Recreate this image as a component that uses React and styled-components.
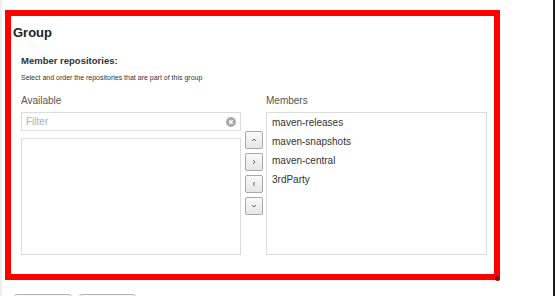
import React from "react";
import styled, { createGlobalStyle } from "styled-components";

const MEMBERS = ["maven-releases", "maven-snapshots", "maven-central", "3rdParty"];

const GlobalStyle = createGlobalStyle`
  html, body {
    margin: 0;
    padding: 0;
    background: #fff;
    font-family: "Liberation Sans", Arial, sans-serif;
    overflow: hidden;
  }
`;

const Page = styled.div`
  position: relative;
  display: flex;
  width: 555px;
  height: 296px;
  box-sizing: border-box;
  border-left: 2px solid #eeeeee;
  border-right: 2px solid #1a1a1a;
  overflow: hidden;
`;

const Content = styled.div`
  flex: 1;
  padding: 25px 0 0 11px;
`;

const Title = styled.h2`
  margin: 0;
  font-size: 13px;
  line-height: 16px;
  font-weight: bold;
  color: #222;
`;

const Section = styled.div`
  padding-left: 8px;
  margin-top: 14px;
`;

const SectionTitle = styled.div`
  font-size: 9.5px;
  line-height: 12px;
  font-weight: bold;
  color: #333;
`;

const Hint = styled.div`
  margin-top: 6px;
  font-size: 7px;
  line-height: 9px;
  color: #333;
`;

const Columns = styled.div`
  display: flex;
  margin-top: 13px;
`;

const Column = styled.div`
  display: flex;
  flex-direction: column;
  width: ${(p) => p.$width}px;
`;

const Label = styled.div`
  font-size: 10px;
  line-height: 12px;
  color: #555;
  margin-bottom: 5px;
`;

const FilterBox = styled.div`
  position: relative;
  display: flex;
  align-items: center;
  height: 19px;
  box-sizing: border-box;
  border: 1px solid #dcdcdc;
  padding: 0 4px;
`;

const FilterInput = styled.input`
  flex: 1;
  border: none;
  outline: none;
  padding: 0;
  font: 10px "Liberation Sans", Arial, sans-serif;
  color: #333;
  background: transparent;
  &::placeholder {
    color: #b0b0b0;
  }
`;

const ClearIcon = styled.svg`
  width: 10px;
  height: 10px;
  flex: none;
`;

const ListBox = styled.div`
  box-sizing: border-box;
  border: 1px solid #dcdcdc;
  height: ${(p) => p.$height}px;
  margin-top: ${(p) => p.$gap || 0}px;
  padding: 0 5px;
`;

const Item = styled.div`
  font-size: 10px;
  line-height: 19px;
  color: #333;
`;

const Mover = styled.div`
  display: flex;
  flex-direction: column;
  gap: 4px;
  width: 25px;
  padding: 36px 0 0 4px;
  box-sizing: border-box;
`;

const MoveButton = styled.button`
  display: flex;
  align-items: center;
  justify-content: center;
  width: 18px;
  height: 18px;
  padding: 0;
  box-sizing: border-box;
  border: 1px solid #a8a8a8;
  border-radius: 2px;
  background: linear-gradient(#fafafa, #e6e6e6);
`;

const Footer = styled.div`
  display: flex;
  gap: 7px;
  margin: 39px 0 0 1px;
`;

const FooterButton = styled.button`
  width: ${(p) => p.$width}px;
  height: 24px;
  border: 1px solid #b5b5b5;
  border-radius: 3px;
  background: linear-gradient(#fafafa, #e8e8e8);
`;

const Highlight = styled.div`
  position: absolute;
  left: 3px;
  top: 10px;
  width: 495px;
  height: 270px;
  box-sizing: border-box;
  border: 6px solid #ff0000;
  pointer-events: none;
`;

const Handle = styled.div`
  position: absolute;
  left: 493px;
  top: 276px;
  width: 5px;
  height: 5px;
  border-radius: 50%;
  background: #8a1010;
`;

const Chevron = ({ points }) => (
  <svg width="8" height="8" viewBox="0 0 8 8">
    <polyline points={points} fill="none" stroke="#666" strokeWidth="1" />
  </svg>
);

const CHEVRONS = ["2,5 4,3 6,5", "3,2 5,4 3,6", "5,2 3,4 5,6", "2,3 4,5 6,3"];

const App = () => (
  <Page>
    <GlobalStyle />
    <Content>
      <Title>Group</Title>
      <Section>
        <SectionTitle>Member repositories:</SectionTitle>
        <Hint>Select and order the repositories that are part of this group</Hint>
        <Columns>
          <Column $width={220}>
            <Label>Available</Label>
            <FilterBox>
              <FilterInput placeholder="Filter" />
              <ClearIcon viewBox="0 0 10 10">
                <circle cx="5" cy="5" r="5" fill="#a9a9a9" />
                <path d="M3.3 3.3 L6.7 6.7 M6.7 3.3 L3.3 6.7" stroke="#fff" strokeWidth="1.4" />
              </ClearIcon>
            </FilterBox>
            <ListBox $height={117} $gap={7} />
          </Column>
          <Mover>
            {CHEVRONS.map((p) => (
              <MoveButton key={p}>
                <Chevron points={p} />
              </MoveButton>
            ))}
          </Mover>
          <Column $width={221}>
            <Label>Members</Label>
            <ListBox $height={143}>
              {MEMBERS.map((m) => (
                <Item key={m}>{m}</Item>
              ))}
            </ListBox>
          </Column>
        </Columns>
      </Section>
      <Footer>
        <FooterButton $width={58} />
        <FooterButton $width={57} />
      </Footer>
    </Content>
    <Highlight />
    <Handle />
  </Page>
);

export default App;
